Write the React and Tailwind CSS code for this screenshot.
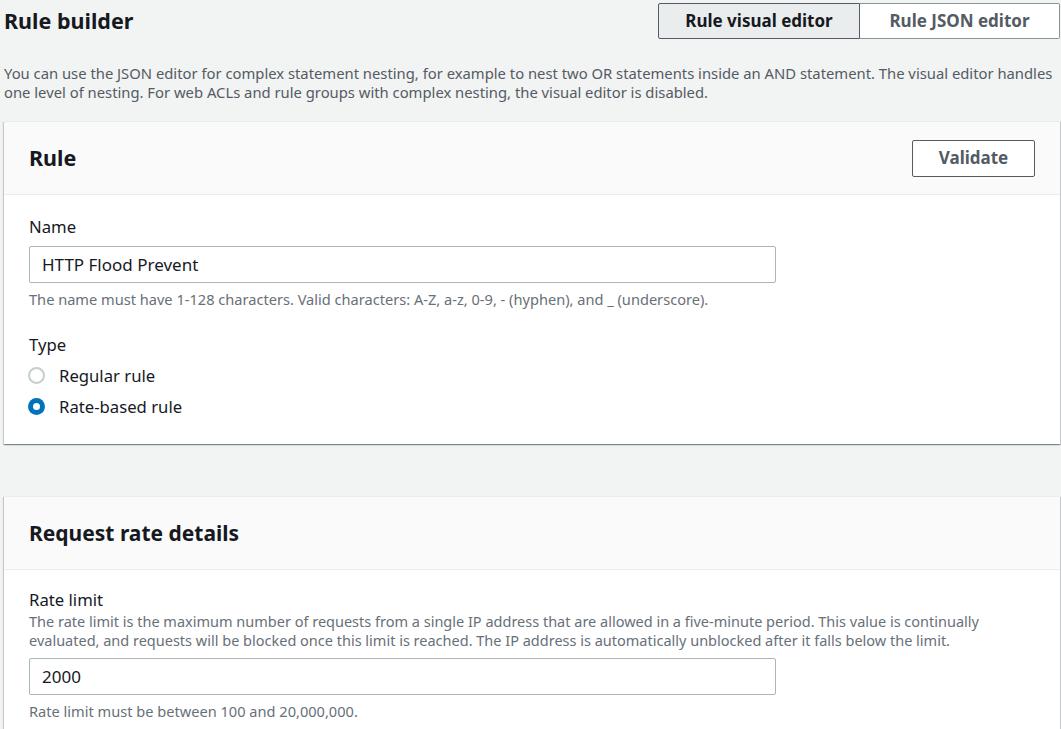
import React from "react";

function Radio({ checked, label }) {
  return (
    <div className="flex items-center h-[31px]">
      {checked ? (
        <span className="w-[17px] h-[17px] rounded-full bg-[#0073bb] flex items-center justify-center ml-[-1px]">
          <span className="w-[7px] h-[7px] rounded-full bg-white"></span>
        </span>
      ) : (
        <span className="w-[17px] h-[17px] rounded-full border-2 border-[#c5cdcd] bg-white ml-[-1px]"></span>
      )}
      <span className="ml-[14px] text-[16.7px] text-[#16191f] leading-[22px]">{label}</span>
    </div>
  );
}

const panelShadow =
  "shadow-[0_1px_1px_0_rgba(0,28,36,0.3),1px_1px_1px_0_rgba(0,28,36,0.15),-1px_1px_1px_0_rgba(0,28,36,0.15)]";

export default function App() {
  return (
    <div
      className="min-h-[729px] bg-[#f2f3f3] pl-[4px] pr-[1px] pt-[3px] pb-[40px]"
      style={{ fontFamily: '"Noto Sans", "Open Sans", sans-serif' }}
    >
      <div className="flex items-center justify-between h-[36px]">
        <h1 className="text-[21.5px] font-bold text-[#16191f] leading-[28px] mt-[-1px]">Rule builder</h1>
        <div className="flex h-[36px]">
          <button className="w-[202px] h-[36px] bg-[#eaeded] border border-[#545b64] rounded-l-[2px] text-[17px] font-bold text-[#16191f]">
            Rule visual editor
          </button>
          <button className="w-[200px] h-[36px] bg-white border border-l-0 border-[#879596] rounded-r-[2px] text-[17px] font-bold text-[#545b64]">
            Rule JSON editor
          </button>
        </div>
      </div>

      <p className="mt-[25px] text-[14.8px] leading-[19px] text-[#545b64]">
        You can use the JSON editor for complex statement nesting, for example to nest two OR statements inside an AND statement. The visual editor handles one level of nesting. For web ACLs and rule groups with complex nesting, the visual editor is disabled.
      </p>

      <section className={`mt-[19px] bg-white border-t border-[#eaeded] ${panelShadow}`}>
        <div className="h-[73px] bg-[#fafafa] border-b border-[#eaeded] flex items-center justify-between px-[25px]">
          <h2 className="text-[21.5px] font-bold text-[#16191f] leading-[28px]">Rule</h2>
          <button className="w-[123px] h-[37px] bg-white border border-[#545b64] rounded-[2px] text-[17px] font-bold text-[#545b64]">
            Validate
          </button>
        </div>
        <div className="px-[25px] pt-[21px] pb-[22px]">
          <div className="text-[16.7px] leading-[22px] text-[#16191f]">Name</div>
          <div className="mt-[8px] w-[747px] h-[37px] border border-[#aab7b8] rounded-[2px] bg-white flex items-center pl-[12px] text-[17px] text-[#16191f]">
            HTTP Flood Prevent
          </div>
          <div className="mt-[6px] text-[14.6px] leading-[20px] text-[#687078]">
            The name must have 1-128 characters. Valid characters: A-Z, a-z, 0-9, - (hyphen), and _ (underscore).
          </div>
          <div className="mt-[25px] text-[16.7px] leading-[22px] text-[#16191f]">Type</div>
          <div className="mt-[4px]">
            <Radio label="Regular rule" />
            <Radio checked label="Rate-based rule" />
          </div>
        </div>
      </section>

      <section className={`mt-[52px] bg-white border-t border-[#eaeded] ${panelShadow}`}>
        <div className="h-[73px] bg-[#fafafa] border-b border-[#eaeded] flex items-center px-[25px]">
          <h2 className="text-[21px] font-bold text-[#16191f] leading-[28px]">Request rate details</h2>
        </div>
        <div className="px-[25px] pt-[19px] pb-[20px]">
          <div className="text-[16.7px] leading-[22px] text-[#16191f]">Rate limit</div>
          <div className="mt-[1px] text-[14.5px] leading-[19px] text-[#687078]">
            The rate limit is the maximum number of requests from a single IP address that are allowed in a five-minute period. This value is continually evaluated, and requests will be blocked once this limit is reached. The IP address is automatically unblocked after it falls below the limit.
          </div>
          <div className="mt-[8px] w-[747px] h-[37px] border border-[#aab7b8] rounded-[2px] bg-white flex items-center pl-[12px] text-[17px] text-[#16191f]">
            2000
          </div>
          <div className="mt-[6px] text-[14.6px] leading-[20px] text-[#687078]">
            Rate limit must be between 100 and 20,000,000.
          </div>
        </div>
      </section>
    </div>
  );
}
